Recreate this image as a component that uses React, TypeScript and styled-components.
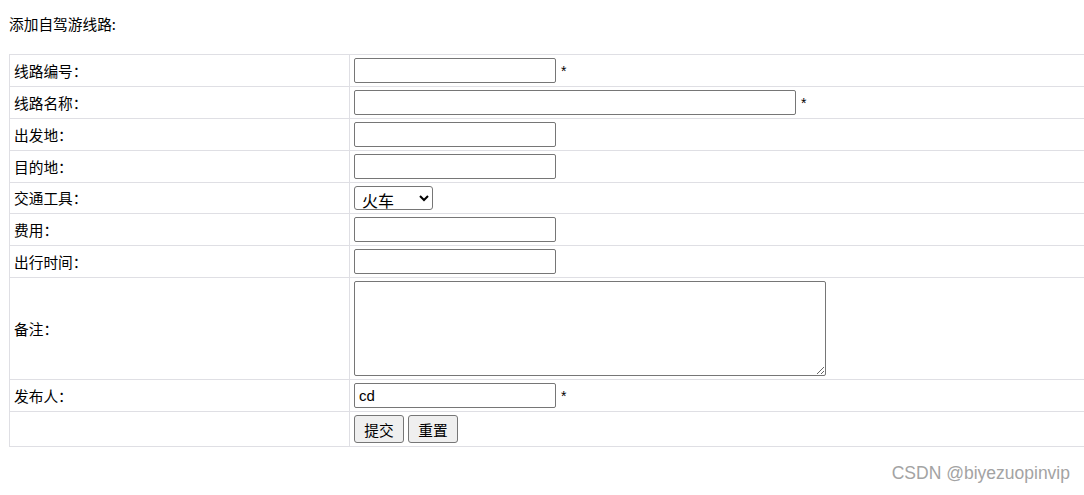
import React from 'react';
import styled, { createGlobalStyle } from 'styled-components';

const GlobalStyle = createGlobalStyle`
  html, body {
    margin: 0;
    padding: 0;
    background: #fff;
    overflow: hidden;
  }
  body {
    font-family: "Microsoft YaHei", "Noto Sans CJK SC", "Liberation Sans", sans-serif;
    font-size: 14.7px;
    color: #000;
  }
`;

const Page = styled.div`
  position: relative;
  width: 1084px;
  height: 495px;
  padding-left: 9px;
  box-sizing: border-box;
`;

const Title = styled.div`
  padding-top: 15px;
  line-height: 18px;
  margin-bottom: 21px;
`;

const FormTable = styled.table`
  width: 1090px;
  border-collapse: collapse;
  table-layout: fixed;
`;

const Cell = styled.td<{ $label?: boolean; $h?: number }>`
  border: 1px solid #dfdfe4;
  padding: 3px 4px;
  width: ${({ $label }) => ($label ? '331px' : 'auto')};
  height: ${({ $h }) => $h ?? 25}px;
  vertical-align: middle;
  line-height: 18px;
  white-space: nowrap;
`;

const TextInput = styled.input<{ $w: number }>`
  box-sizing: border-box;
  width: ${({ $w }) => $w}px;
  height: 25px;
  border: 1px solid #767676;
  border-radius: 2px;
  padding: 1px 4px;
  font-family: "Liberation Sans", Arial, sans-serif;
  font-size: 15px;
  color: #000;
  vertical-align: middle;
  background: #fff;
`;

const Required = styled.span`
  margin-left: 5px;
  font-family: "Liberation Sans", Arial, sans-serif;
  font-size: 14px;
  vertical-align: middle;
`;

const Select = styled.select`
  box-sizing: border-box;
  width: 79px;
  height: 24px;
  border: 1px solid #767676;
  border-radius: 3px;
  padding: 0 3px;
  font-family: "Microsoft YaHei", "Noto Sans CJK SC", sans-serif;
  font-size: 16px;
  color: #000;
  background: #fff;
  vertical-align: middle;
`;

const Memo = styled.textarea`
  display: block;
  box-sizing: border-box;
  width: 472px;
  height: 95px;
  border: 1px solid #767676;
  border-radius: 2px;
  resize: both;
  margin: 0;
`;

const Button = styled.button`
  box-sizing: border-box;
  width: 50px;
  height: 28px;
  margin-right: 4px;
  border: 1px solid #767676;
  border-radius: 3px;
  background: #efefef;
  font-family: "Microsoft YaHei", "Noto Sans CJK SC", sans-serif;
  font-size: 14.7px;
  color: #000;
  padding: 0;
  vertical-align: middle;
`;

const Watermark = styled.div`
  position: absolute;
  right: 14px;
  top: 463px;
  font-family: "Liberation Sans", Arial, sans-serif;
  font-size: 17.5px;
  color: #a3a3a3;
`;

type Row = { label: string; width?: number; required?: boolean; value?: string };

const fields: Row[] = [
  { label: '线路编号：', width: 202, required: true },
  { label: '线路名称：', width: 442, required: true },
  { label: '出发地：', width: 202 },
  { label: '目的地：', width: 202 },
];

const moreFields: Row[] = [
  { label: '费用：', width: 202 },
  { label: '出行时间：', width: 202 },
];

const InputRow = ({ label, width = 202, required, value }: Row) => (
  <tr>
    <Cell $label>{label}</Cell>
    <Cell>
      <TextInput $w={width} defaultValue={value} />
      {required && <Required>*</Required>}
    </Cell>
  </tr>
);

export default function App() {
  return (
    <Page>
      <GlobalStyle />
      <Title>添加自驾游线路:</Title>
      <FormTable>
        <tbody>
          {fields.map((f) => (
            <InputRow key={f.label} {...f} />
          ))}
          <tr>
            <Cell $label $h={24}>交通工具：</Cell>
            <Cell $h={24}>
              <Select defaultValue="火车">
                <option>火车</option>
                <option>汽车</option>
                <option>飞机</option>
              </Select>
            </Cell>
          </tr>
          {moreFields.map((f) => (
            <InputRow key={f.label} {...f} />
          ))}
          <tr>
            <Cell $label>备注：</Cell>
            <Cell>
              <Memo />
            </Cell>
          </tr>
          <InputRow label="发布人：" width={202} required value="cd" />
          <tr>
            <Cell $label />
            <Cell>
              <Button>提交</Button>
              <Button>重置</Button>
            </Cell>
          </tr>
        </tbody>
      </FormTable>
      <Watermark>CSDN @biyezuopinvip</Watermark>
    </Page>
  );
}
